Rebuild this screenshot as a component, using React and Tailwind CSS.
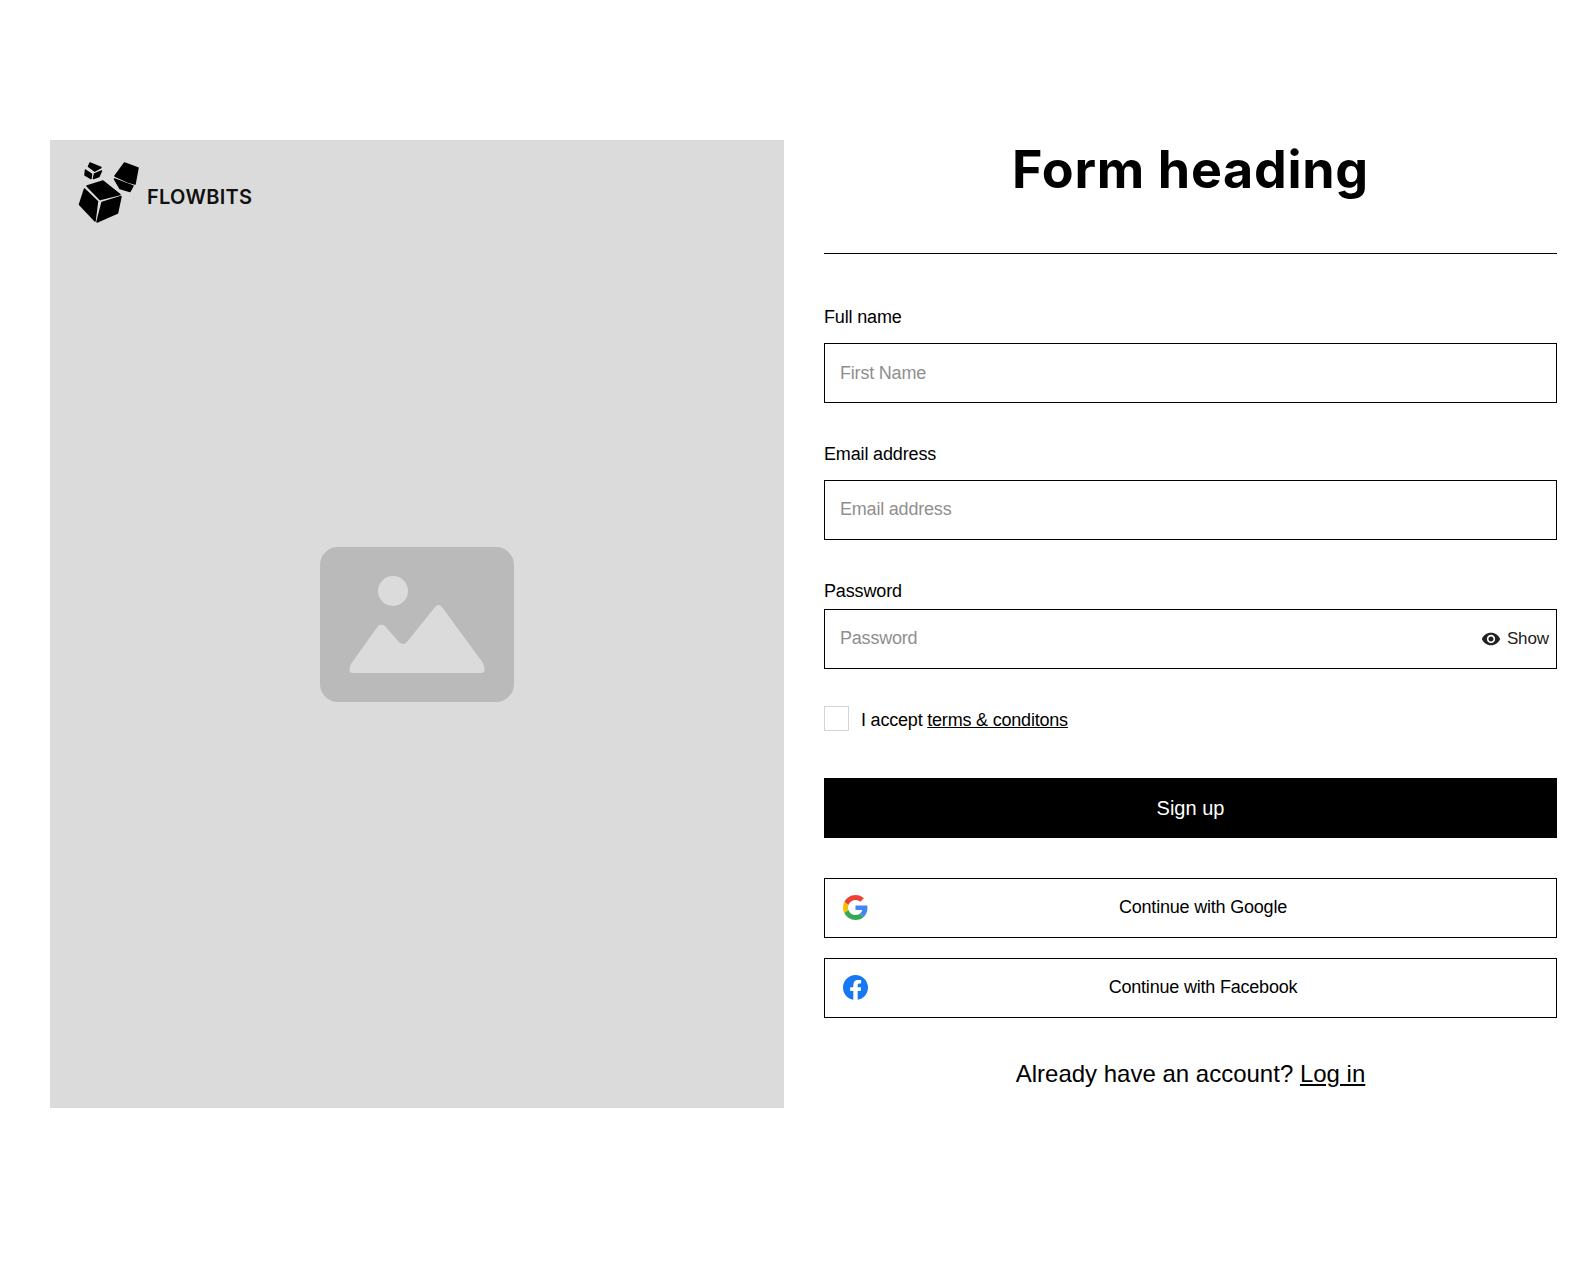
// Sign up page with image placeholder panel and form column.

import React from "react";

const sans = "font-['Liberation_Sans',Arial,sans-serif]";

const Logo = () => (
  <div className="flex items-center gap-[2px]">
    <svg width="70" height="70" viewBox="0 0 70 70" className="block">
      <g fill="#000" stroke="#000" strokeWidth="1.5" strokeLinejoin="round">
        <polygon points="12,28 28,23 45,36.5 25,41.5" />
        <polygon points="9.5,31 22.5,43.5 20,63 4.5,46.5" />
        <polygon points="27,44.5 46,38.5 42.5,55 22,64" />
        <polygon points="49.5,5 63,10 60,26 53,24 40,18" />
        <polygon points="39.5,21 58,28 55,33.5 45,30.5" />
        <polygon points="15,5 26,9.5 19.5,13 13.5,8.5" />
        <polygon points="10.5,12 16.5,16 16,20.5 10,17" />
        <polygon points="19.5,16 26.5,13 24,18.5 18.5,20.5" />
      </g>
    </svg>
    <span className="mt-[7px] font-['Inter',sans-serif] text-[20px] leading-[24px] font-semibold tracking-[0.3px] text-[#111]">
      FLOWBITS
    </span>
  </div>
);

const ImagePlaceholder = () => (
  <svg width="194" height="155" viewBox="0 0 194 155" className="block">
    <rect width="194" height="155" rx="18" fill="#bababa" />
    <circle cx="73" cy="44" r="15" fill="#dbdbdb" />
    <path
      d="M33 126 Q27 126 31 117 L58 79 Q61 76 65 79 L79 95 Q83 99 87 95 L115 60 Q118 56 122 60 L163 116 Q167 126 161 126 Z"
      fill="#dbdbdb"
    />
  </svg>
);

const GoogleIcon = () => (
  <svg width="25" height="25" viewBox="0 0 48 48" className="mb-[2px]">
    <path fill="#EA4335" d="M24 9.5c3.54 0 6.71 1.22 9.21 3.6l6.85-6.85C35.9 2.38 30.47 0 24 0 14.62 0 6.51 5.38 2.56 13.22l7.98 6.19C12.43 13.72 17.74 9.5 24 9.5z" />
    <path fill="#4285F4" d="M46.98 24.55c0-1.57-.15-3.09-.38-4.55H24v9.02h12.94c-.58 2.96-2.26 5.48-4.78 7.18l7.73 6c4.51-4.18 7.09-10.36 7.09-17.65z" />
    <path fill="#FBBC05" d="M10.53 28.59c-.48-1.45-.76-2.99-.76-4.59s.27-3.14.76-4.59l-7.98-6.19C.92 16.46 0 20.12 0 24c0 3.88.92 7.54 2.56 10.78l7.97-6.19z" />
    <path fill="#34A853" d="M24 48c6.48 0 11.93-2.13 15.89-5.81l-7.73-6c-2.15 1.45-4.92 2.3-8.16 2.3-6.26 0-11.57-4.22-13.47-9.91l-7.98 6.19C6.51 42.62 14.62 48 24 48z" />
  </svg>
);

const FacebookIcon = () => (
  <svg width="25" height="25" viewBox="0 0 24 24" className="mb-[2px]">
    <path fill="#1877F2" d="M24 12c0-6.63-5.37-12-12-12S0 5.37 0 12c0 5.99 4.39 10.95 10.13 11.85v-8.38H7.08V12h3.05V9.36c0-3.01 1.79-4.67 4.53-4.67 1.31 0 2.69.23 2.69.23v2.95h-1.51c-1.49 0-1.96.93-1.96 1.87V12h3.33l-.53 3.47h-2.8v8.38C19.61 22.95 24 17.99 24 12z" />
    <path fill="#fff" d="M16.67 15.47l.53-3.47h-3.33V9.74c0-.94.47-1.87 1.96-1.87h1.51V4.92s-1.38-.23-2.69-.23c-2.74 0-4.53 1.66-4.53 4.67V12H7.08v3.47h3.05v8.38c.61.1 1.24.15 1.87.15s1.26-.05 1.87-.15v-8.38h2.8z" />
  </svg>
);

const EyeIcon = () => (
  <svg width="20" height="20" viewBox="0 0 24 24" fill="#222">
    <path d="M12 4.5C7 4.5 2.73 7.61 1 12c1.73 4.39 6 7.5 11 7.5s9.27-3.11 11-7.5c-1.73-4.39-6-7.5-11-7.5zM12 17c-2.76 0-5-2.24-5-5s2.24-5 5-5 5 2.24 5 5-2.24 5-5 5zm0-8c-1.66 0-3 1.34-3 3s1.34 3 3 3 3-1.34 3-3-1.34-3-3-3z" />
  </svg>
);

const TextField = ({ label, placeholder, type = "text", className = "", inputClass = "" }) => (
  <div className={className}>
    <label className="block text-[18px] leading-[27px] tracking-[-0.15px] text-black">{label}</label>
    <input
      type={type}
      placeholder={placeholder}
      className={`mt-[12px] block h-[60px] w-full border border-black bg-white px-[15px] text-[18px] tracking-[-0.2px] outline-none placeholder:text-[#8f8f8f] ${inputClass}`}
    />
  </div>
);

const SocialButton = ({ icon, children, className = "" }) => (
  <button className={`flex h-[60px] w-full items-center border border-black bg-white pl-[18px] text-[18px] tracking-[-0.2px] text-black ${className}`}>
    {icon}
    <span className="flex-1 pr-[18px] pb-[1px] text-center">{children}</span>
  </button>
);

export default function App() {
  return (
    <div className={`flex min-h-[1288px] gap-10 bg-white pt-[140px] pr-[30px] pl-[50px] ${sans}`}>
      <div className="relative flex h-[968px] w-[734px] items-center justify-center bg-[#dbdbdb]">
        <div className="absolute top-[18px] left-[25px]">
          <Logo />
        </div>
        <ImagePlaceholder />
      </div>

      <div className="w-[733px]">
        <h1 className="h-[60px] text-center font-['Inter',sans-serif] text-[52px] leading-[60px] font-bold tracking-[0.7px] text-black">
          Form heading
        </h1>
        <div className="mt-[53px] h-px bg-black" />

        <TextField className="mt-[50px]" label="Full name" placeholder="First Name" />
        <TextField className="mt-[38px]" label="Email address" placeholder="Email address" type="email" inputClass="pb-[2px]" />

        <div className="mt-[38px]">
          <label className="block text-[18px] leading-[27px] tracking-[-0.15px] text-black">Password</label>
          <div className="relative mt-[4px]">
            <input
              type="password"
              placeholder="Password"
              className="block h-[60px] w-full border border-black bg-white px-[15px] pb-[2px] text-[18px] tracking-[-0.2px] outline-none placeholder:text-[#8f8f8f]"
            />
            <span className="absolute top-0 right-[8px] flex h-full items-center gap-[6px] text-[17px] tracking-[-0.1px] text-[#222]">
              <EyeIcon />
              Show
            </span>
          </div>
        </div>

        <div className="mt-[37px] flex items-start gap-[12px]">
          <span className="h-[25px] w-[25px] border border-[#d4d4d4] bg-white" />
          <span className="mt-[1px] text-[18px] leading-[27px] tracking-[-0.2px] text-black">
            I accept <a className="underline">terms &amp; conditons</a>
          </span>
        </div>

        <button className="mt-[44px] block h-[60px] w-full bg-black text-[20px] text-white">Sign up</button>

        <SocialButton className="mt-[40px]" icon={<GoogleIcon />}>Continue with Google</SocialButton>
        <SocialButton className="mt-[20px]" icon={<FacebookIcon />}>Continue with Facebook</SocialButton>

        <p className="mt-[38px] text-center text-[24px] leading-[36px] text-black">
          Already have an account? <a className="underline">Log in</a>
        </p>
      </div>
    </div>
  );
}
